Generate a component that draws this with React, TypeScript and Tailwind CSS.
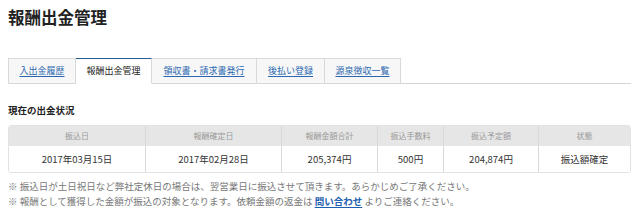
import React from 'react';

const tabs = [
  { label: '入出金履歴', w: 'w-[68px]' },
  { label: '報酬出金管理', w: 'w-[76px]', active: true },
  { label: '領収書・請求書発行', w: 'w-[105px]' },
  { label: '後払い登録', w: 'w-[68px]' },
  { label: '源泉徴収一覧', w: 'w-[76px]' },
];

const cols = [
  { head: '振込日', val: '2017年03月15日', w: 'w-[136px]' },
  { head: '報酬確定日', val: '2017年02月28日', w: 'w-[136px]' },
  { head: '報酬金額合計', val: '205,374円', w: 'w-[96px]' },
  { head: '振込手数料', val: '500円', w: 'w-[66px]' },
  { head: '振込予定額', val: '204,874円', w: 'w-[95px]' },
  { head: '状態', val: '振込額確定', w: 'flex-1' },
];

export default function App() {
  return (
    <div className="w-[640px] h-[211px] bg-white pl-[8px] pr-[9px] font-['Noto_Sans_CJK_JP',sans-serif] text-[#333]">
      <h1 className="pt-[5px] text-[16.5px] font-bold leading-[24px] text-[#222]">報酬出金管理</h1>

      {/* tabs */}
      <div className="mt-[29px] flex border-b border-[#d6d6d6]">
        {tabs.map((t, i) => (
          <div
            key={t.label}
            className={`${t.w} h-[26px] -mb-px flex items-center justify-center text-[9px] border-[#d9d9d9] ${i === 0 ? 'border-l' : ''} border-r ${
              t.active
                ? 'bg-white border-t border-t-[#2c5d91] border-b border-b-white text-[#222]'
                : 'bg-[#f7f7f7] border-t border-b border-b-[#d6d6d6]'
            }`}
          >
            {t.active ? (
              <span>{t.label}</span>
            ) : (
              <span className="text-[#2a67b0] underline underline-offset-2">{t.label}</span>
            )}
          </div>
        ))}
      </div>

      <h2 className="mt-[18px] text-[9.5px] font-bold leading-[16px] text-[#222]">現在の出金状況</h2>

      {/* table */}
      <div className="mt-[7px] flex rounded-[3px] border border-[#e2e2e2] overflow-hidden">
        {cols.map((c, i) => (
          <div key={c.head} className={`${c.w} flex flex-col ${i > 0 ? 'border-l border-[#d9d9d9]' : ''}`}>
            <div className="h-[20px] bg-[#e6e6e6] flex items-center justify-center text-[8px] text-[#999]">{c.head}</div>
            <div className="h-[26px] bg-white flex items-center justify-center text-[9.5px] text-[#333]">{c.val}</div>
          </div>
        ))}
      </div>

      <div className="mt-[6px] text-[9.5px] leading-[14.5px] text-[#777]">
        <p>※ 振込日が土日祝日など弊社定休日の場合は、翌営業日に振込させて頂きます。あらかじめご了承ください。</p>
        <p>
          ※ 報酬として獲得した金額が振込の対象となります。依頼金額の返金は{' '}
          <span className="font-bold text-[#1f5fb0] underline underline-offset-2">問い合わせ</span> よりご連絡ください。
        </p>
      </div>
    </div>
  );
}
